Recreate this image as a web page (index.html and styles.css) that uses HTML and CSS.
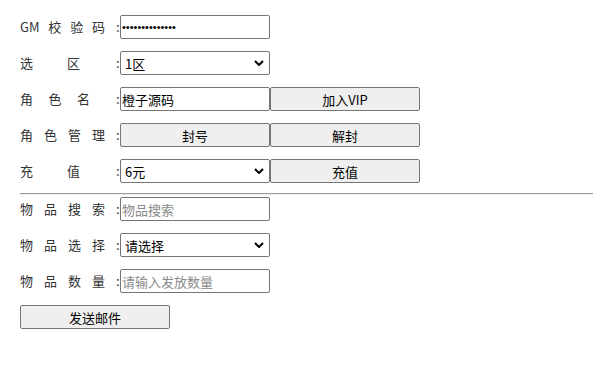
FILE: index.html
```html
<!DOCTYPE html>
<html lang="zh-CN">
  <head>
    <meta charset="UTF-8" />
    <meta name="viewport" content="width=device-width, initial-scale=1.0" />
    <title>GM</title>
    <link rel="stylesheet" href="styles.css">
  </head>
  <body>
    <div class="panel">
      <div class="group">
        <div class="row">
          <label class="label" for="code"><span class="name">GM校验码</span>:</label>
          <input class="field secret" id="code" type="password" value="12345678901234" />
        </div>
        <div class="row">
          <label class="label" for="zone"><span class="name short">选区</span>:</label>
          <select class="field" id="zone">
            <option>1区</option>
            <option>2区</option>
          </select>
        </div>
        <div class="row">
          <label class="label" for="role"><span class="name mid">角色名</span>:</label>
          <input class="field" id="role" type="text" value="橙子源码" />
          <button class="btn">加入VIP</button>
        </div>
        <div class="row">
          <span class="label"><span class="name">角色管理</span>:</span>
          <button class="btn">封号</button>
          <button class="btn">解封</button>
        </div>
        <div class="row">
          <label class="label" for="money"><span class="name short">充值</span>:</label>
          <select class="field" id="money">
            <option>6元</option>
            <option>30元</option>
            <option>98元</option>
          </select>
          <button class="btn">充值</button>
        </div>
      </div>

      <hr />

      <div class="group">
        <div class="row">
          <label class="label" for="search"><span class="name">物品搜索</span>:</label>
          <input class="field" id="search" type="text" placeholder="物品搜索" />
        </div>
        <div class="row">
          <label class="label" for="item"><span class="name">物品选择</span>:</label>
          <select class="field" id="item">
            <option>请选择</option>
          </select>
        </div>
        <div class="row">
          <label class="label" for="count"><span class="name">物品数量</span>:</label>
          <input class="field" id="count" type="text" placeholder="请输入发放数量" />
        </div>
        <div class="row">
          <button class="btn">发送邮件</button>
        </div>
      </div>
    </div>
  </body>
</html>
```

FILE: styles.css
```css
* {
  box-sizing: border-box;
}

html,
body {
  margin: 0;
  padding: 0;
  background: #fff;
}

body {
  font-family: "Noto Sans CJK SC", "Microsoft YaHei", sans-serif;
  font-size: 13px;
  color: #333;
}

.panel {
  padding: 15px 0 0 20px;
}

.group {
  display: flex;
  flex-direction: column;
  gap: 12px;
}

.row {
  display: flex;
  align-items: center;
  height: 24px;
}

.label {
  width: 100px;
  display: flex;
  align-items: center;
  line-height: 24px;
}

.label .name {
  width: 85px;
  margin-right: 11px;
  text-align: justify;
  text-align-last: justify;
  white-space: nowrap;
}

.label .name.mid {
  width: 70px;
  margin-right: 26px;
}

.label .name.short {
  width: 60px;
  margin-right: 36px;
}

.field,
.btn {
  width: 150px;
  height: 24px;
  margin: 0;
  font-family: "Noto Sans CJK SC", "Microsoft YaHei", sans-serif;
  font-size: 13px;
  color: #000;
  border: 1px solid #767676;
  border-radius: 2px;
}

.field {
  padding: 0 2px 0 1px;
  background: #fff;
}

.field.secret {
  font-family: "Liberation Sans", Arial, sans-serif;
  font-size: 11px;
}

select.field {
  appearance: none;
  padding: 0 0 0 4px;
  background: #fff url("data:image/svg+xml,%3Csvg xmlns='http://www.w3.org/2000/svg' width='10' height='6' viewBox='0 0 10 6'%3E%3Cpath d='M1 1l4 4 4-4' fill='none' stroke='%23000' stroke-width='2'/%3E%3C/svg%3E") no-repeat right 5px center;
}

.field::placeholder {
  color: #8a8a8a;
}

.btn {
  background: #efefef;
  padding: 0;
  text-align: center;
}

hr {
  margin: 10px 0 2px;
  border: 0;
  border-top: 1px solid #9a9a9a;
  border-bottom: 1px solid #eee;
  height: 0;
}
```
